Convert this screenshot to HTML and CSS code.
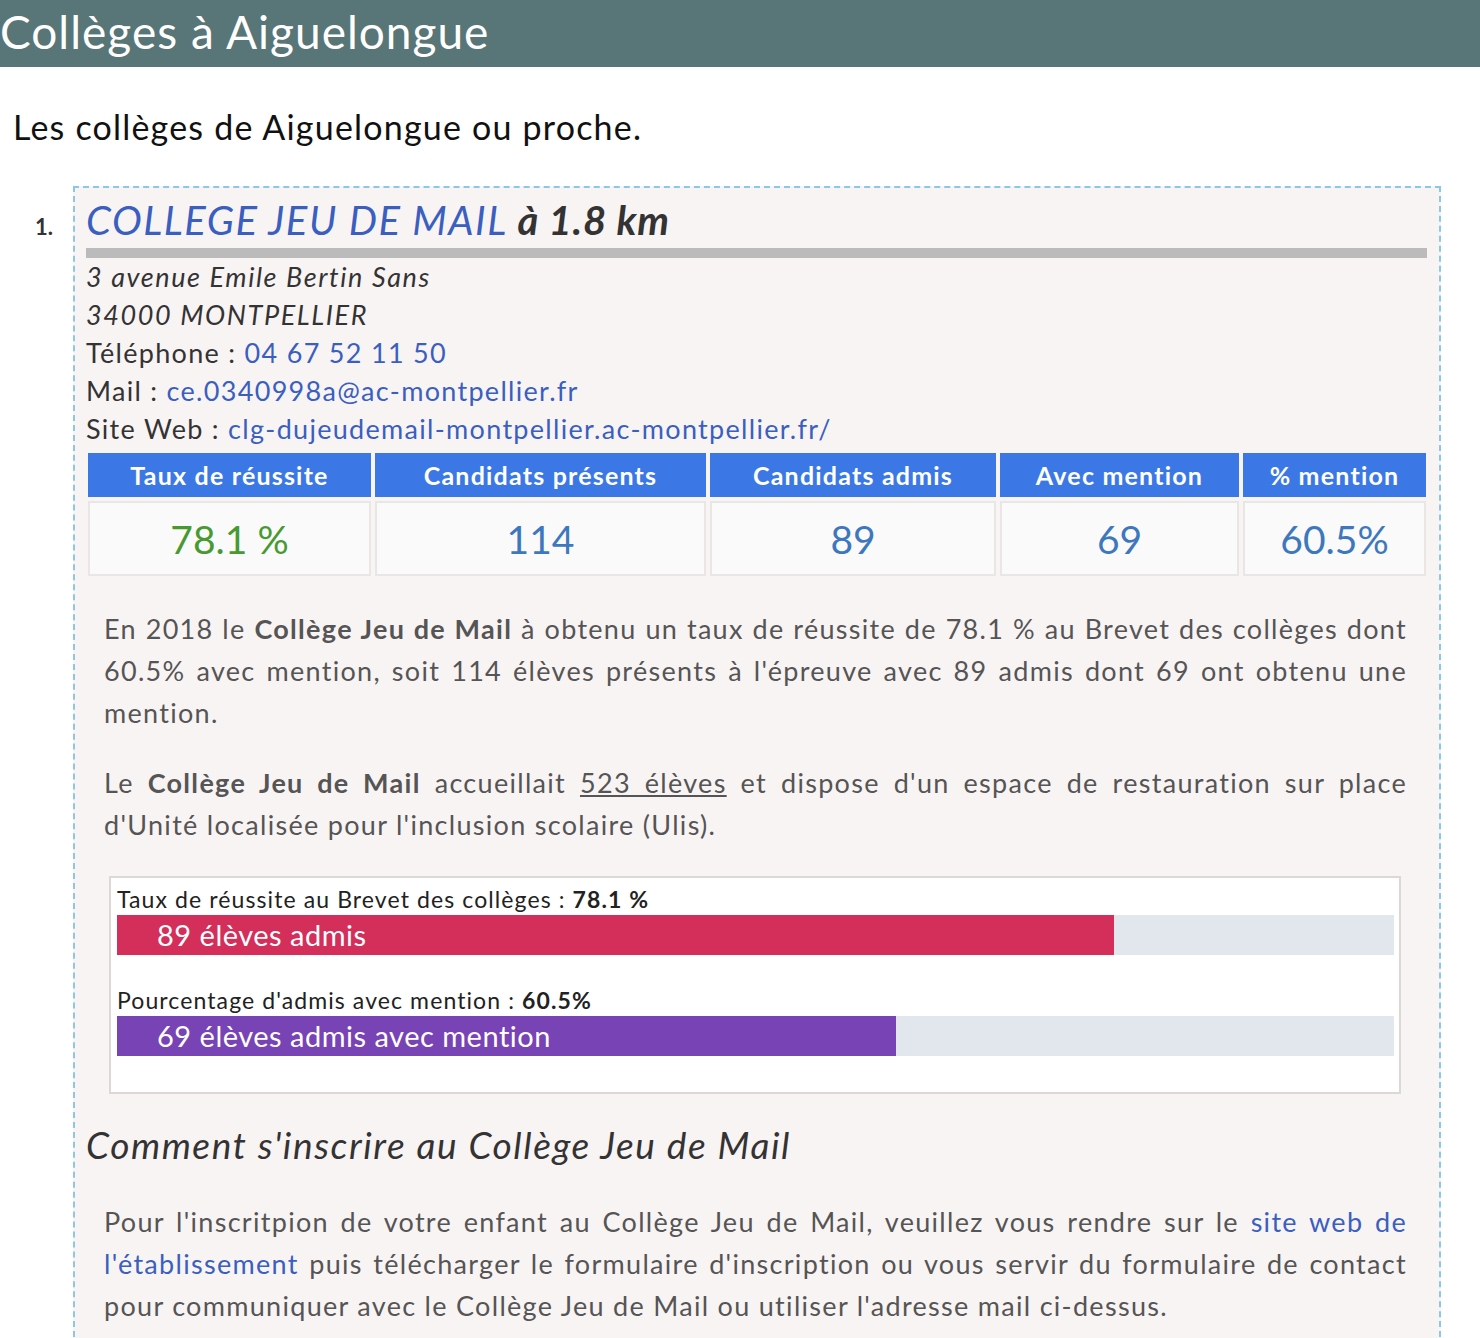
FILE: index.html
```html
<!DOCTYPE html>
<html lang="fr">
<head>
<meta charset="utf-8">
<title>Collèges à Aiguelongue</title>
<link rel="stylesheet" href="styles.css">
</head>
<body>
<header class="topbar"><h1>Collèges à Aiguelongue</h1></header>
<p class="intro">Les collèges de Aiguelongue ou proche.</p>
<ol class="list">
  <li class="item">
    <span class="num">1.</span>
    <article class="card">
      <h2 class="title"><a class="name" href="#">COLLEGE JEU DE MAIL</a> <b>à 1.8 km</b></h2>
      <div class="addr">
        <div class="it">3 avenue Emile Bertin Sans</div>
        <div class="it">34000 MONTPELLIER</div>
        <div>Téléphone : <a href="#">04 67 52 11 50</a></div>
        <div>Mail : <a href="#">ce.0340998a@ac-montpellier.fr</a></div>
        <div>Site Web : <a href="#">clg-dujeudemail-montpellier.ac-montpellier.fr/</a></div>
      </div>
      <table class="stats">
        <thead>
          <tr><th class="c1">Taux de réussite</th><th class="c2">Candidats présents</th><th class="c3">Candidats admis</th><th class="c4">Avec mention</th><th class="c5">% mention</th></tr>
        </thead>
        <tbody>
          <tr><td class="green">78.1 %</td><td>114</td><td>89</td><td>69</td><td>60.5%</td></tr>
        </tbody>
      </table>
      <p class="txt">En 2018 le <b>Collège Jeu de Mail</b> à obtenu un taux de réussite de 78.1 % au Brevet des collèges dont 60.5% avec mention, soit 114 élèves présents à l'épreuve avec 89 admis dont 69 ont obtenu une mention.</p>
      <p class="txt">Le <b>Collège Jeu de Mail</b> accueillait <u>523 élèves</u> et dispose d'un espace de restauration sur place d'Unité localisée pour l'inclusion scolaire (Ulis).</p>
      <div class="chart">
        <div class="group">
          <div class="label">Taux de réussite au Brevet des collèges : <b>78.1 %</b></div>
          <div class="track"><div class="bar red" style="width:78.1%">89 élèves admis</div></div>
        </div>
        <div class="group">
          <div class="label">Pourcentage d'admis avec mention : <b>60.5%</b></div>
          <div class="track"><div class="bar purple" style="width:61%">69 élèves admis avec mention</div></div>
        </div>
      </div>
      <h3 class="sub">Comment s'inscrire au Collège Jeu de Mail</h3>
      <p class="txt">Pour l'inscritpion de votre enfant au Collège Jeu de Mail, veuillez vous rendre sur le <a href="#">site web de l'établissement</a> puis télécharger le formulaire d'inscription ou vous servir du formulaire de contact pour communiquer avec le Collège Jeu de Mail ou utiliser l'adresse mail ci-dessus.</p>
    </article>
  </li>
</ol>
</body>
</html>
```
FILE: styles.css
```css
html, body {
  margin: 0;
  padding: 0;
  background: #fff;
  font-family: Lato, "Open Sans", sans-serif;
  color: #333;
}
a { color: #3a5fc0; text-decoration: none; }

.topbar {
  background: #587577;
  height: 67px;
  display: flex;
  align-items: center;
}
.topbar h1 {
  margin: 0;
  color: #fff;
  font-weight: 400;
  font-size: 46px;
  letter-spacing: 1px;
  line-height: 67px;
  padding-bottom: 4px;
}

.intro {
  margin: 0;
  padding: 40px 0 0 13px;
  font-size: 34px;
  letter-spacing: 1.2px;
  line-height: 40px;
  color: #111;
  font-weight: 400;
}

.list {
  list-style: none;
  margin: 0;
  padding: 39px 0 0 35px;
}
.item {
  display: flex;
  align-items: baseline;
}
.num {
  width: 38px;
  font-weight: 700;
  font-size: 22px;
  color: #333;
}
.card {
  width: 1341px;
  border: 2px dashed #8cc7e4;
  border-bottom: none;
  background: #f9f4f4;
  padding: 9px 12px 20px 11px;
}

.title {
  margin: 0;
  font-size: 40px;
  line-height: 47px;
  letter-spacing: 1.5px;
  font-style: italic;
  font-weight: 400;
  border-bottom: 10px solid #bbb;
  padding-bottom: 4px;
}
.title .name { color: #3a5fc0; }
.title b { color: #333; font-weight: 700; letter-spacing: 0.8px; }

.addr {
  font-size: 27px;
  letter-spacing: 1.3px;
  line-height: 38px;
  color: #333;
}
.addr .it { font-style: italic; letter-spacing: 1.6px; }

.stats {
  width: calc(100% + 4px);
  margin: 1px 0 0 -2px;
  border-collapse: separate;
  border-spacing: 4px;
  table-layout: fixed;
}
.stats th {
  background: #3b78e6;
  color: #fff;
  font-size: 25px;
  font-weight: 700;
  letter-spacing: 1.2px;
  height: 44px;
  padding: 0;
}
.stats .c1 { width: 283px; }
.stats .c2 { width: 331px; }
.stats .c3 { width: 286px; }
.stats .c4 { width: 239px; }
.stats .c5 { width: 183px; }
.stats td {
  background: #fbfafa;
  border: 2px solid #ebe6e6;
  height: 71px;
  padding: 0;
  text-align: center;
  font-size: 39px;
  color: #3d78be;
}
.stats td.green { color: #479a31; }

.txt {
  margin: 28px 0 0;
  padding: 0 20px 0 18px;
  font-size: 27px;
  letter-spacing: 1.3px;
  line-height: 42px;
  color: #555;
  text-align: justify;
}
.txt b { color: #555; }

.chart {
  margin: 30px 26px 0 23px;
  background: #fff;
  border: 2px solid #ddd8d8;
  padding: 6px 5px 6px 6px;
}
.group { margin-bottom: 30px; }
.label {
  font-size: 23px;
  letter-spacing: 1.1px;
  line-height: 31px;
  color: #222;
}
.track {
  background: #e2e7ee;
  height: 40px;
}
.bar {
  height: 40px;
  line-height: 40px;
  padding-left: 40px;
  box-sizing: border-box;
  color: #fff;
  font-size: 29px;
  letter-spacing: 0.5px;
  white-space: nowrap;
}
.bar.red { background: #d42e5a; }
.bar.purple { background: #7743b5; }

.sub {
  margin: 27px 0 0;
  font-size: 37px;
  letter-spacing: 1.6px;
  line-height: 48px;
  font-style: italic;
  font-weight: 400;
  color: #333;
}
.sub + .txt { margin-top: 32px; }
```
